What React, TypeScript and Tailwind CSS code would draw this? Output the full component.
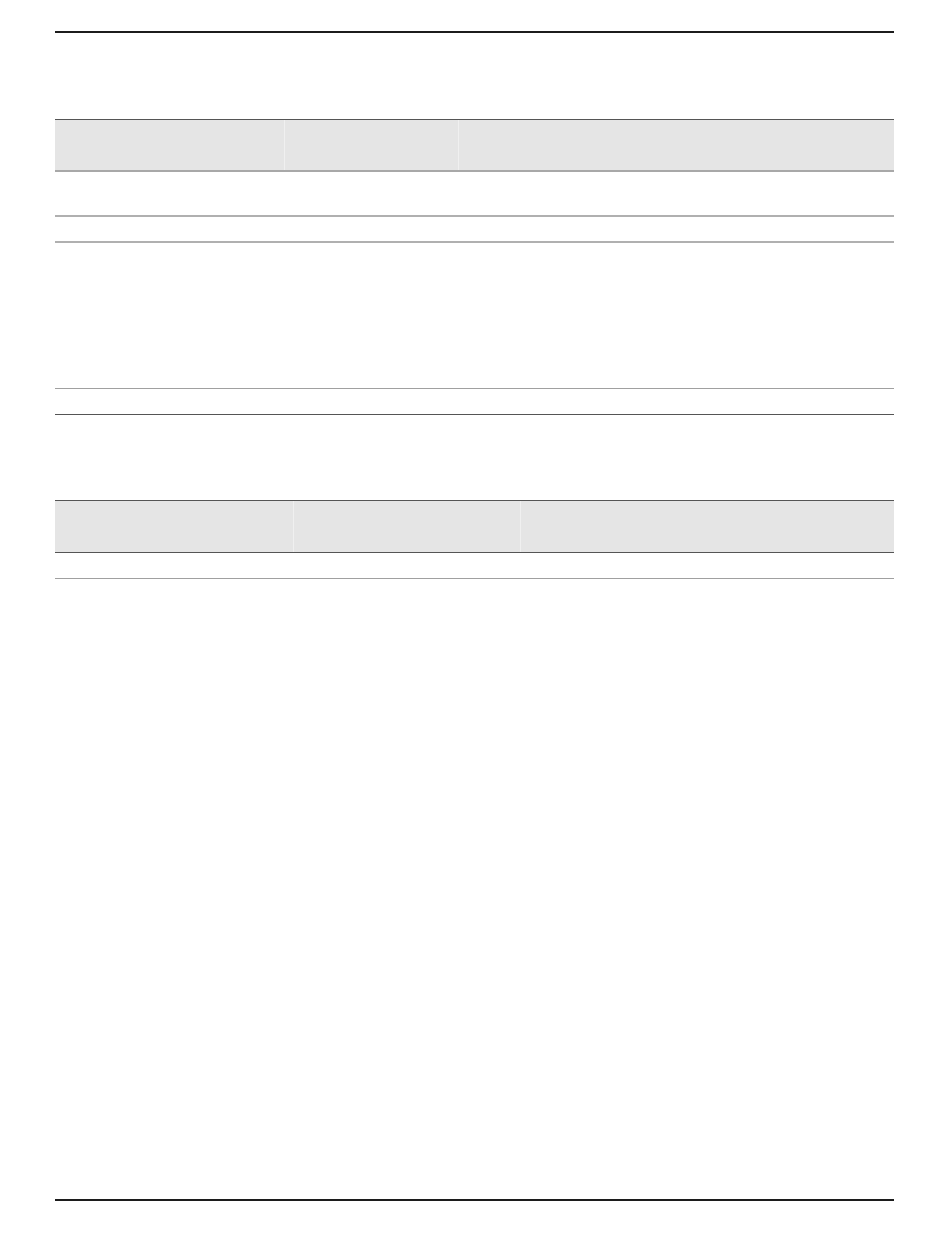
export default function App() {
  return (
    <div className="w-[950px] h-[1260px] bg-white" style={{ fontFamily: '"Liberation Sans", Arial, sans-serif' }}>
      <div className="ml-[55px] w-[839px] pt-[31px] flex flex-col">
        <div className="h-[2px] bg-[#1c1c1c]" />
        <div className="h-[86px]" />
        {/* Table 1 */}
        <div className="flex flex-col border-t border-[#555555]">
          <div className="grid grid-cols-[230px_174px_1fr] h-[52px] bg-[#e5e5e5] border-b-2 border-[#a8a8a8]">
            <div className="border-r border-[#f0f0f0]" />
            <div className="border-r border-[#f0f0f0]" />
            <div />
          </div>
          <div className="h-[45px] border-b-2 border-[#b0b0b0]" />
          <div className="h-[26px] border-b-2 border-[#b0b0b0]" />
          <div className="h-[146px] border-b border-[#a0a0a0]" />
          <div className="h-[26px] border-b border-[#555555]" />
        </div>
        <div className="h-[85px]" />
        {/* Table 2 */}
        <div className="flex flex-col border-t border-[#555555]">
          <div className="grid grid-cols-[239px_227px_1fr] h-[52px] bg-[#e5e5e5] border-b border-[#555555]">
            <div className="border-r border-[#f0f0f0]" />
            <div className="border-r border-[#f0f0f0]" />
            <div />
          </div>
          <div className="h-[26px] border-b border-[#a0a0a0]" />
        </div>
        <div className="h-[620px]" />
        <div className="h-[2px] bg-[#1c1c1c]" />
      </div>
    </div>
  );
}
